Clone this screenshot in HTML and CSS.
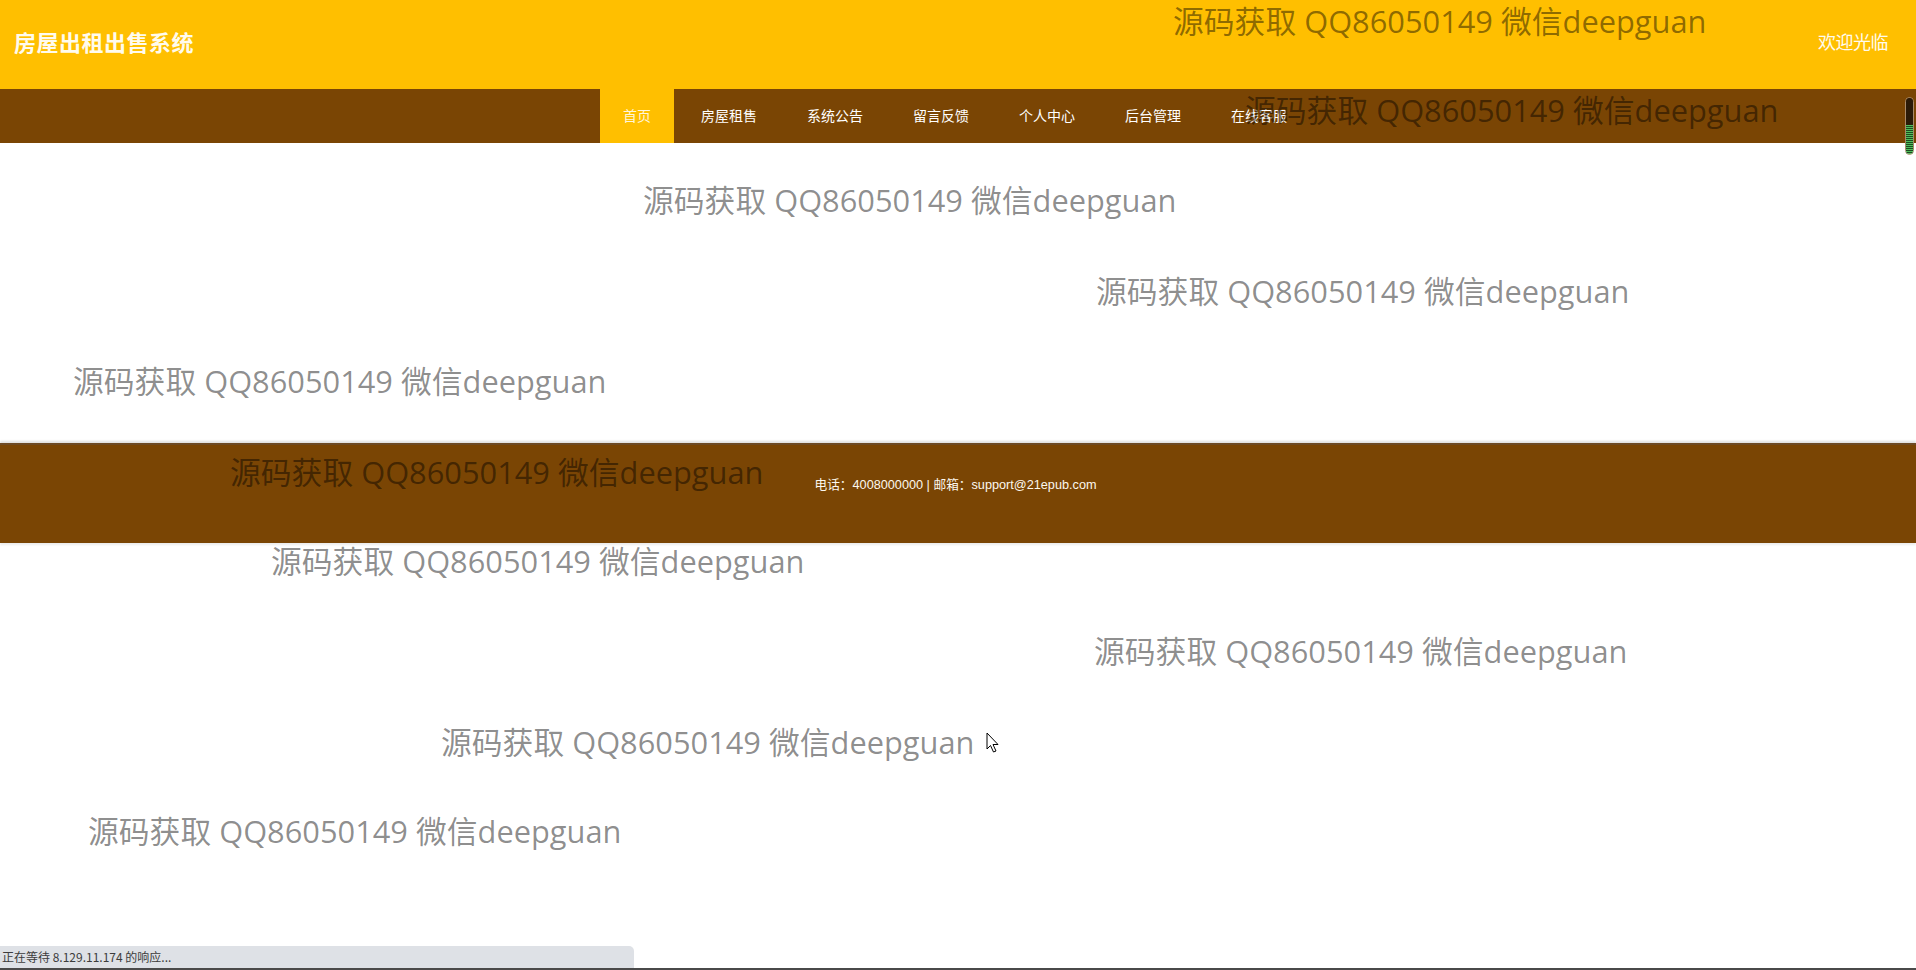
FILE: index.html
```html
<!DOCTYPE html>
<html lang="zh-CN">
<head>
<meta charset="utf-8">
<title>房屋出租出售系统</title>
<link rel="stylesheet" href="styles.css">
</head>
<body>
<div class="page">
  <header class="topbar">
    <div class="brand">房屋出租出售系统</div>
    <div class="welcome">欢迎光临</div>
  </header>
  <nav class="navbar">
    <ul class="menu">
      <li class="menu-item active"><a href="#">首页</a></li>
      <li class="menu-item"><a href="#">房屋租售</a></li>
      <li class="menu-item"><a href="#">系统公告</a></li>
      <li class="menu-item"><a href="#">留言反馈</a></li>
      <li class="menu-item"><a href="#">个人中心</a></li>
      <li class="menu-item"><a href="#">后台管理</a></li>
      <li class="menu-item"><a href="#">在线客服</a></li>
    </ul>
  </nav>
  <main class="content"></main>
  <footer class="footer">
    <p class="footer-text">电话：4008000000 | 邮箱：support@21epub.com</p>
  </footer>
</div>

<div class="watermarks">
  <span class="wm wm1">源码获取 QQ86050149 微信deepguan</span>
  <span class="wm wm2">源码获取 QQ86050149 微信deepguan</span>
  <span class="wm wm3">源码获取 QQ86050149 微信deepguan</span>
  <span class="wm wm4">源码获取 QQ86050149 微信deepguan</span>
  <span class="wm wm5">源码获取 QQ86050149 微信deepguan</span>
  <span class="wm wm6">源码获取 QQ86050149 微信deepguan</span>
  <span class="wm wm7">源码获取 QQ86050149 微信deepguan</span>
  <span class="wm wm8">源码获取 QQ86050149 微信deepguan</span>
  <span class="wm wm9">源码获取 QQ86050149 微信deepguan</span>
  <span class="wm wm10">源码获取 QQ86050149 微信deepguan</span>
</div>

<div class="meter"><div class="meter-top"></div><div class="meter-bottom"></div></div>

<svg class="cursor" width="14" height="21" viewBox="0 0 14 21">
  <path d="M1 1 L1 17 L4.5 13.5 L7.5 20 L10 19 L7 12.5 L12 12.5 Z" fill="#fff" stroke="#000" stroke-width="1" stroke-linejoin="round"/>
</svg>

<div class="status">正在等待 8.129.11.174 的响应...</div>
<div class="bottom-edge"></div>
</body>
</html>
```

FILE: styles.css
```css
html, body {
  margin: 0;
  padding: 0;
  background: #ffffff;
}
body {
  font-family: "Liberation Sans", "Noto Sans CJK SC", sans-serif;
  height: 970px;
  overflow: hidden;
  position: relative;
}
.page {
  display: flex;
  flex-direction: column;
}
.topbar {
  height: 89px;
  background: #ffbf00;
  display: flex;
  align-items: center;
  justify-content: space-between;
  padding: 0 28px 7px 14px;
  box-sizing: border-box;
}
.brand {
  font-family: "Noto Sans CJK SC", sans-serif;
  font-size: 22px;
  font-weight: 700;
  color: #fffbee;
  letter-spacing: 0.5px;
}
.welcome {
  font-family: "Noto Sans CJK SC", sans-serif;
  font-size: 18px;
  color: #fffbee;
  letter-spacing: -0.5px;
}
.navbar {
  height: 54px;
  background: #7a4504;
  display: flex;
  justify-content: flex-start;
  padding-left: 600px;
}
.menu {
  list-style: none;
  margin: 0;
  padding: 0;
  display: flex;
  gap: 4px;
}
.menu-item a {
  display: block;
  height: 54px;
  line-height: 52px;
  padding: 0 23px;
  font-family: "Noto Sans CJK SC", sans-serif;
  font-size: 14px;
  color: #ffffff;
  text-decoration: none;
}
.menu-item.active a {
  background: #ffbf00;
  color: #fff6dc;
}
.content {
  height: 300px;
  background: #ffffff;
}
.footer {
  height: 100px;
  background: #7a4504;
  border-top: 2px solid #6e4a24;
  box-shadow: 0 -2px 2px rgba(0, 0, 0, 0.12), 0 2px 2px rgba(0, 0, 0, 0.08);
  box-sizing: border-box;
}
.footer-text {
  margin: 0;
  padding: 32px 5px 0 0;
  text-align: center;
  font-size: 12.7px;
  line-height: 16px;
  color: #fdf8ee;
}
.watermarks {
  position: absolute;
  inset: 0;
  pointer-events: none;
  z-index: 5;
}
.wm {
  position: absolute;
  white-space: nowrap;
  font-family: "Open Sans", "Noto Sans CJK SC", sans-serif;
  font-size: 30.8px;
  line-height: 40px;
  color: rgba(0, 0, 0, 0.46);
}
.wm1 { left: 1173px; top: 1px; }
.wm2 { left: 1245px; top: 90px; }
.wm3 { left: 643px; top: 180px; }
.wm4 { left: 1096px; top: 271px; }
.wm5 { left: 73px; top: 361px; }
.wm6 { left: 230px; top: 452px; }
.wm7 { left: 271px; top: 541px; }
.wm8 { left: 1094px; top: 631px; }
.wm9 { left: 441px; top: 722px; }
.wm10 { left: 88px; top: 811px; }
.meter {
  position: absolute;
  left: 1905px;
  top: 97px;
  width: 9px;
  height: 58px;
  border: 1px solid #a88a6a;
  border-radius: 5px;
  box-sizing: border-box;
  overflow: hidden;
  display: flex;
  flex-direction: column;
  z-index: 6;
}
.meter-top {
  flex: 0 0 27px;
  background: #2b1a08;
}
.meter-bottom {
  flex: 1;
  background: repeating-linear-gradient(to bottom, #4fbf5a 0, #4fbf5a 1px, #1f4a22 1px, #1f4a22 2px);
}
.cursor {
  position: absolute;
  left: 986px;
  top: 732px;
  z-index: 7;
}
.status {
  position: absolute;
  left: 0;
  bottom: 2px;
  width: 634px;
  height: 22px;
  line-height: 22px;
  background: #dee1e6;
  border-top-right-radius: 5px;
  font-family: "Noto Sans CJK SC", sans-serif;
  font-size: 12px;
  color: #3c3c3c;
  padding-left: 2px;
  box-sizing: border-box;
  z-index: 8;
}
.bottom-edge {
  position: absolute;
  left: 0;
  right: 0;
  bottom: 0;
  height: 2px;
  background: #4a4a4a;
  z-index: 8;
}
```
